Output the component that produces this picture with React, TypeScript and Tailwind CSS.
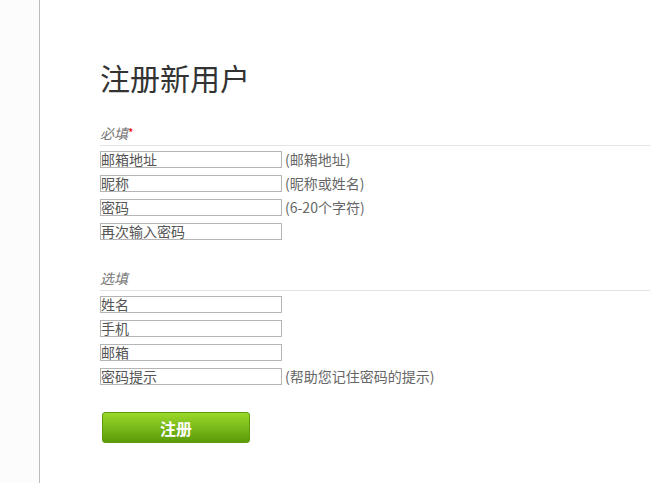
const required = [
  { placeholder: '邮箱地址', hint: '(邮箱地址)' },
  { placeholder: '昵称', hint: '(昵称或姓名)' },
  { placeholder: '密码', hint: '(6-20个字符)' },
  { placeholder: '再次输入密码', hint: '' },
];

const optional = [
  { placeholder: '姓名', hint: '' },
  { placeholder: '手机', hint: '' },
  { placeholder: '邮箱', hint: '' },
  { placeholder: '密码提示', hint: '(帮助您记住密码的提示)' },
];

function Field({ placeholder, hint }: { placeholder: string; hint: string }) {
  return (
    <div className="flex items-center h-[24px]">
      <input
        className="w-[182px] h-[17px] border border-[#b5b5b5] bg-white px-0 py-0 text-[14px] leading-[15px] text-[#333] placeholder:text-[#555] outline-none"
        placeholder={placeholder}
      />
      {hint && <span className="ml-[3px] text-[14px] text-[#666]">{hint}</span>}
    </div>
  );
}

function Section({
  title,
  required: isRequired,
  fields,
}: {
  title: string;
  required?: boolean;
  fields: { placeholder: string; hint: string }[];
}) {
  return (
    <div>
      <div className="text-[14px] italic text-[#777] leading-[20px] pb-[2px] border-b border-[#e3e3e3]">
        {title}
        {isRequired && <span className="text-[#e00] not-italic align-top text-[12px]">*</span>}
      </div>
      <div className="pt-[1px]">
        {fields.map((f) => (
          <Field key={f.placeholder} {...f} />
        ))}
      </div>
    </div>
  );
}

export default function App() {
  return (
    <div
      className="flex min-h-[483px] w-[650px] bg-white"
      style={{ fontFamily: '"Noto Sans CJK SC", "Noto Sans", sans-serif' }}
    >
      <div className="w-[40px] shrink-0 bg-[#fcfcfc] border-r border-[#bbbbbb]" />
      <div className="flex-1 pl-[60px] pt-[55px]">
        <h1 className="text-[30px] leading-[44px] text-[#333] font-normal">注册新用户</h1>
        <div className="mt-[24px]">
          <Section title="必填" required fields={required} />
        </div>
        <div className="mt-[25px]">
          <Section title="选填" fields={optional} />
        </div>
        <button className="mt-[24px] ml-[2px] w-[148px] h-[31px] rounded-[3px] border border-[#5c9a12] bg-gradient-to-b from-[#9ad82a] to-[#5b9c06] text-white text-[16px] font-bold">
          注册
        </button>
      </div>
    </div>
  );
}
